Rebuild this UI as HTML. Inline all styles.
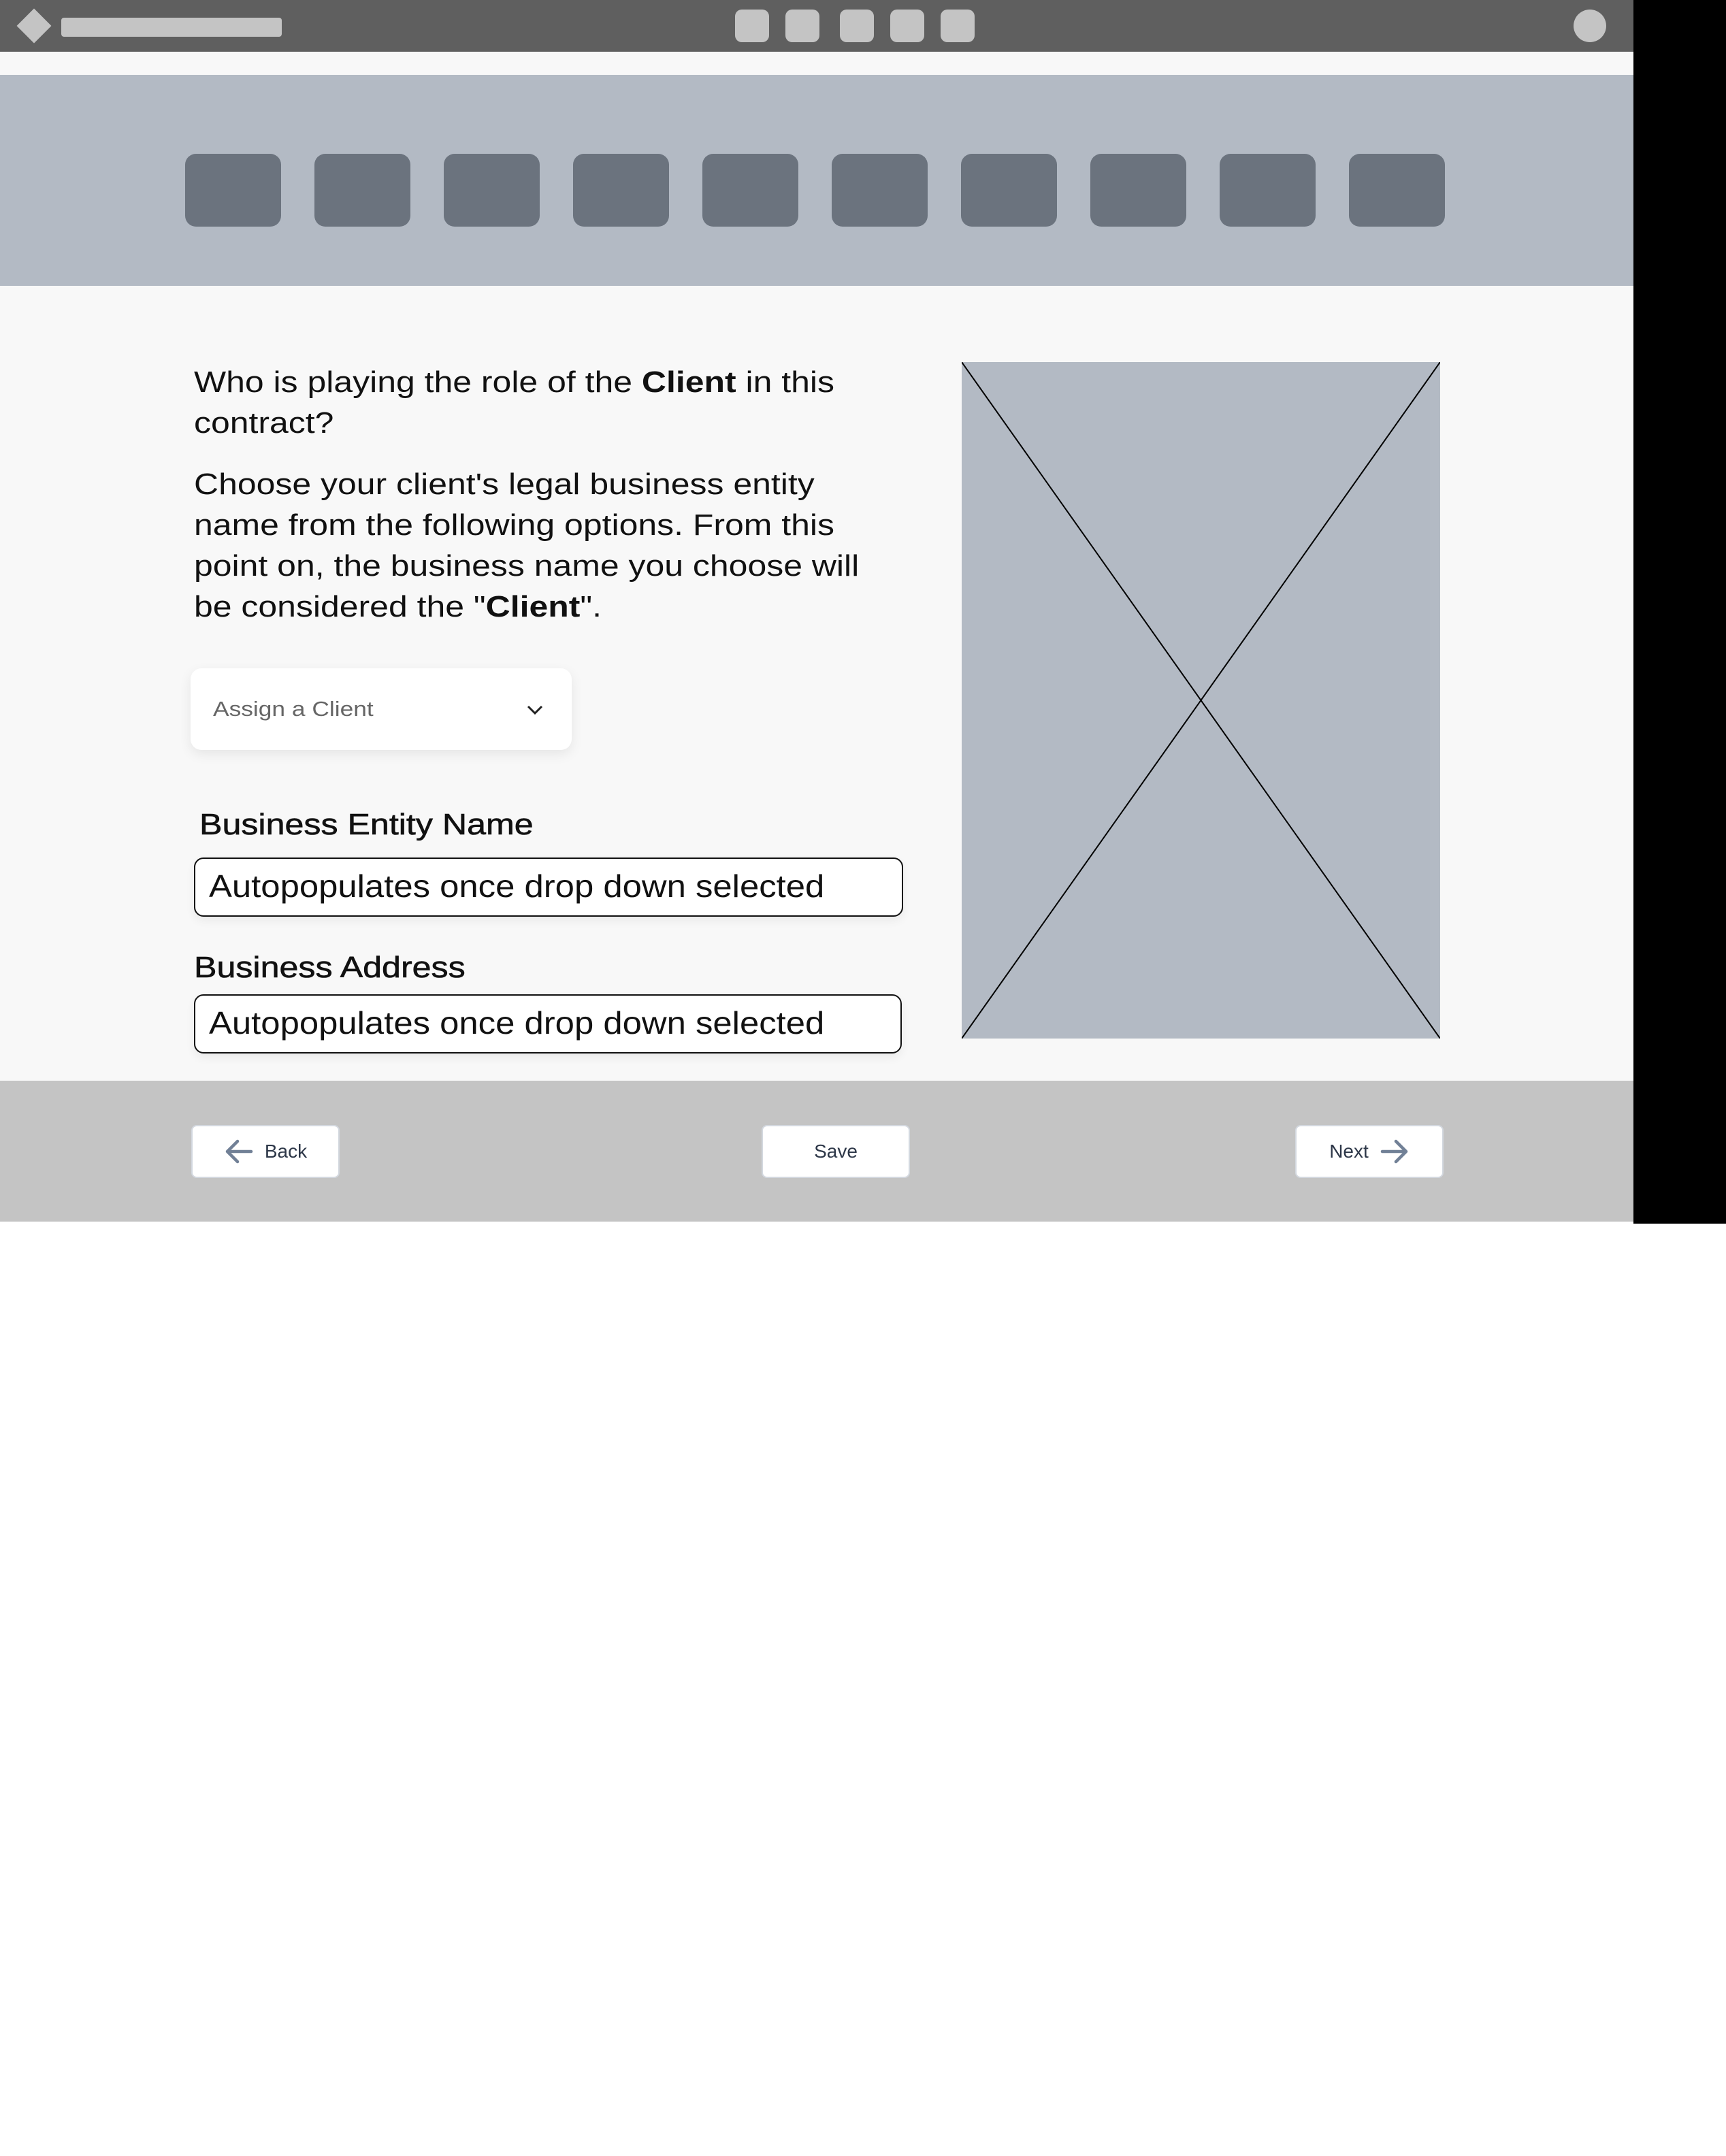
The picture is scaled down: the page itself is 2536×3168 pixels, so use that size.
<!DOCTYPE html>
<html><head><meta charset="utf-8"><style>
*{margin:0;padding:0;box-sizing:border-box}
body{width:2536px;height:3168px;background:#fff;position:relative;font-family:"Liberation Sans",sans-serif;overflow:hidden}
.a{position:absolute}
.sq{position:absolute;top:14px;width:50px;height:48px;border-radius:10px;background:#c4c4c4}
.nb{position:absolute;top:226px;width:141px;height:107px;border-radius:16px;background:#6b737e}
.t{position:absolute;left:285px;font-size:44px;line-height:60px;color:#111;white-space:nowrap;transform:scaleX(1.135);transform-origin:0 0}
.lbl{position:absolute;font-size:44px;line-height:50px;color:#111;white-space:nowrap;transform:scaleX(1.14);transform-origin:0 0;-webkit-text-stroke:0.6px #111}
.inp{position:absolute;left:285px;height:87px;border:2.5px solid #111;border-radius:14px;background:#fff;box-shadow:0 6px 14px rgba(0,0,0,.06)}
.inp span{position:absolute;left:20px;top:12px;font-size:46px;line-height:56px;color:#111;white-space:nowrap;transform:scaleX(1.105);transform-origin:0 0}
.btn{position:absolute;top:1653px;width:218px;height:78px;background:#fff;border:2px solid #d3d8df;border-radius:8px;color:#2d3748;font-size:28px;display:flex;align-items:center;justify-content:center}
</style></head><body>
<div class="a" style="left:0;top:0;width:2400px;height:76px;background:#5f5f5f"></div>
<div class="a" style="left:2400px;top:0;width:136px;height:1798px;background:#000"></div>
<div class="a" style="left:32px;top:20px;width:36px;height:36px;background:#c4c4c4;transform:rotate(45deg)"></div>
<div class="a" style="left:90px;top:26px;width:324px;height:28px;border-radius:4px;background:#c4c4c4"></div>
<div class="sq" style="left:1080px"></div><div class="sq" style="left:1154px"></div><div class="sq" style="left:1234px"></div><div class="sq" style="left:1308px"></div><div class="sq" style="left:1382px"></div>
<div class="a" style="left:2312px;top:14px;width:48px;height:48px;border-radius:50%;background:#c4c4c4"></div>
<div class="a" style="left:0;top:76px;width:2400px;height:34px;background:#f8f8f8"></div>
<div class="a" style="left:0;top:110px;width:2400px;height:310px;background:#b3bac4"></div>
<div class="nb" style="left:272px"></div><div class="nb" style="left:462px"></div><div class="nb" style="left:652px"></div><div class="nb" style="left:842px"></div><div class="nb" style="left:1032px"></div><div class="nb" style="left:1222px"></div><div class="nb" style="left:1412px"></div><div class="nb" style="left:1602px"></div><div class="nb" style="left:1792px"></div><div class="nb" style="left:1982px"></div>
<div class="a" style="left:0;top:420px;width:2400px;height:1168px;background:#f8f8f8"></div>
<div class="t" style="top:532px">Who is playing the role of the <b>Client</b> in this<br>contract?</div>
<div class="t" style="top:682px">Choose your client's legal business entity<br>name from the following options. From this<br>point on, the business name you choose will<br>be considered the "<b>Client</b>".</div>
<div class="a" style="left:280px;top:982px;width:560px;height:120px;background:#fff;border-radius:16px;box-shadow:0 6px 18px rgba(0,0,0,.08)">
<span class="a" style="left:33px;top:40px;font-size:31px;line-height:40px;color:#666;transform:scaleX(1.14);transform-origin:0 0;white-space:nowrap">Assign a Client</span>
<svg class="a" style="left:492px;top:52px" width="28" height="18" viewBox="0 0 28 18"><path d="M4 4 L14 14 L24 4" fill="none" stroke="#222" stroke-width="3"/></svg>
</div>
<div class="lbl" style="left:293px;top:1187px">Business Entity Name</div>
<div class="inp" style="top:1260px;width:1042px"><span>Autopopulates once drop down selected</span></div>
<div class="lbl" style="left:285px;top:1397px">Business Address</div>
<div class="inp" style="top:1461px;width:1040px"><span>Autopopulates once drop down selected</span></div>
<svg class="a" style="left:1413px;top:532px" width="703" height="994"><rect width="703" height="994" fill="#b3bac4"/><line x1="0" y1="0" x2="703" y2="994" stroke="#000" stroke-width="2"/><line x1="703" y1="0" x2="0" y2="994" stroke="#000" stroke-width="2"/></svg>
<div class="a" style="left:0;top:1588px;width:2400px;height:207px;background:#c4c4c4"></div>
<div class="btn" style="left:281px"><svg width="44" height="40" viewBox="0 0 44 40" style="margin-right:16px"><path d="M40 20 H6 M20 5 L5 20 L20 35" fill="none" stroke="#718096" stroke-width="4.5" stroke-linecap="round" stroke-linejoin="round"/></svg>Back</div>
<div class="btn" style="left:1119px">Save</div>
<div class="btn" style="left:1903px">Next<svg width="44" height="40" viewBox="0 0 44 40" style="margin-left:16px"><path d="M4 20 H38 M24 5 L39 20 L24 35" fill="none" stroke="#718096" stroke-width="4.5" stroke-linecap="round" stroke-linejoin="round"/></svg></div>
</body></html>
